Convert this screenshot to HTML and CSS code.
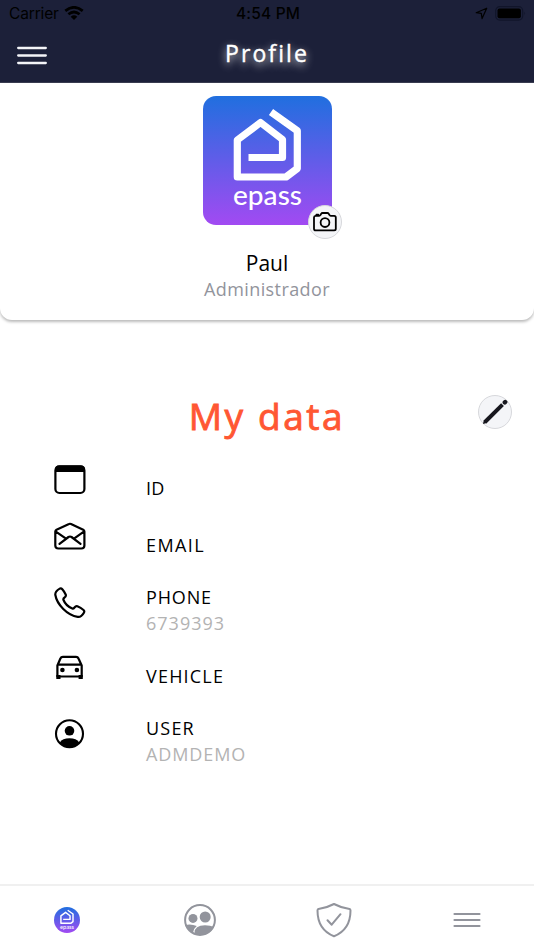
FILE: index.html
```html
<!DOCTYPE html>
<html lang="en">
<head>
<meta charset="utf-8">
<title>Profile</title>
<link rel="stylesheet" href="styles.css">
</head>
<body>
<svg class="defs" width="0" height="0" aria-hidden="true">
  <defs>
    <linearGradient id="brand" x1="0" y1="0" x2="0" y2="1"><stop offset="0" stop-color="#206fdf"/><stop offset="1" stop-color="#a24af2"/></linearGradient>
    <symbol id="epass" viewBox="0 0 129 129">
      <rect width="129" height="129" fill="url(#brand)"/>
      <path d="M45.500 61.500H79.500V43.500L57.500 26.500L34.300 44V81H83L94.300 72.500V34.800L68 16" fill="none" stroke="#fff" stroke-width="7.200" stroke-linejoin="round"/>
      <text x="30" y="108.500" textLength="69" lengthAdjust="spacingAndGlyphs" class="logo-text">epass</text>
    </symbol>
  </defs>
</svg>
<header class="top">
  <div class="status">
    <div class="carrier"><span>Carrier</span>
      <svg width="20" height="15" viewBox="0 0 20 15"><g fill="none" stroke="#000" stroke-width="2.700"><path d="M1.300 4.900Q10-2.300 18.700 4.900"/><path d="M4.400 8.300Q10 3.700 15.600 8.300"/></g><path d="M6.700 10.700Q10 8 13.300 10.700L10 14Z"/></svg>
    </div>
    <div class="clock">4:54 PM</div>
    <div class="indicators">
      <svg width="13" height="13" viewBox="0 0 13 13"><path d="M11.700 1.200L1.200 5.700L6.300 6.400L7.100 11.600Z" fill="none" stroke="#000" stroke-width="1.200" stroke-linejoin="round"/></svg>
      <svg width="32" height="15" viewBox="0 0 32 15"><rect x=".7" y=".7" width="27" height="13.400" rx="4" fill="none" stroke="#11152a" stroke-width="1.200"/><rect x="2.500" y="2.500" width="23.400" height="9.700" rx="2"/><path d="M29.300 5.500Q31 7.300 29.300 9.300Z" fill="#11152a"/></svg>
    </div>
  </div>
  <nav class="bar">
    <svg class="menu" width="30" height="19" viewBox="0 0 30 19"><path d="M1.200 2H28.800M1.200 9.500H28.800M1.200 17H28.800" stroke="#f3f4f8" stroke-width="2.300" stroke-linecap="round"/></svg>
    <h1>Profile</h1>
  </nav>
</header>
<section class="card">
  <div class="avatar">
    <svg class="picture" width="129" height="129"><use href="#epass"/></svg>
    <span class="badge camera"><svg width="24" height="20" viewBox="0 0 24 20" fill="none" stroke="#000" stroke-width="1.800" stroke-linejoin="round"><path d="M2.500 3.800H6.200Q7 3.800 7.500 2.900L8.200 1.800Q8.600 1 9.500 1H14.300Q15.200 1 15.700 1.800L16.400 2.900Q16.900 3.800 17.700 3.800H21.200Q22.800 3.800 22.800 5.400V16.800Q22.800 18.400 21.200 18.400H2.600Q1 18.400 1 16.800V5.400Q1 3.800 2.500 3.800Z"/><circle cx="12" cy="10.600" r="4.400"/><path d="M3.400 3.500V2.700H5.300V3.500"/></svg></span>
  </div>
  <div class="name">Paul</div>
  <div class="role">Administrador</div>
</section>
<main>
  <div class="heading">
    <h2>My data</h2>
    <span class="badge edit"><svg width="26" height="26" viewBox="0 0 26 26"><path d="M3 23L20.500 5.700" stroke="#17171e" stroke-width="4"/><path d="M1 25L1.800 21L5 24Z" fill="#17171e"/><path d="M22.800 3.400L23.200 3" stroke="#17171e" stroke-width="4.400" stroke-linecap="round"/></svg></span>
  </div>
  <div class="row">
    <svg width="32" height="32" viewBox="0 0 32 32"><rect x="1.400" y="2.400" width="29" height="26.600" rx="4" fill="none" stroke="#000" stroke-width="2.200"/><path d="M1 8V5Q1 1.500 5 1.500H27Q31 1.500 31 5V8Z"/></svg>
    <div class="field"><span class="id">ID</span></div>
  </div>
  <div class="row">
    <svg width="32" height="32" viewBox="0 0 32 32" fill="none" stroke="#000" stroke-width="2.200" stroke-linejoin="round" stroke-linecap="round"><path d="M1.300 10.500Q1.300 9.500 2.500 8.800L15 3Q16 2.500 17 3L29.200 8.800Q30.400 9.500 30.400 10.500V24.500Q30.400 27.500 27.400 27.500H4.300Q1.300 27.500 1.300 24.500ZM1.500 10.300L12 17.700M30.200 10.300L20 17.700M5.500 22.800L14.500 16Q16 15 17.500 16L26.500 22.800"/></svg>
    <div class="field"><span class="email">EMAIL</span></div>
  </div>
  <div class="row double">
    <svg width="32" height="32" viewBox="0 0 32 32" fill="none" stroke="#000" stroke-width="2.200" stroke-linejoin="round"><path d="M5.300 1.900Q7 .8 8.300 2.300Q10.500 4.800 11.800 7.800Q12.200 9.200 10.600 10.500Q8.900 11.600 9.500 13Q11.800 18.800 18.300 21.500Q19.400 21.900 20.500 20.500Q21.800 18.800 23.400 19.300Q26.800 20.700 29.500 23Q30.800 24.200 29.900 25.700Q27.300 30.400 23.700 29.900C13.500 28.300 2.900 17.700 1.300 7.800Q1.100 4.300 5.300 1.900Z"/></svg>
    <div class="field"><span class="phone">PHONE</span><span class="value number">6739393</span></div>
  </div>
  <div class="row">
    <svg width="32" height="32" viewBox="0 0 32 32"><path d="M3.400 13.500L6.400 6.500Q7.100 4.800 8.900 4.800H22Q23.800 4.800 24.500 6.500L27.700 13.500V24.500H3.400ZM4 12.600H27.200" fill="none" stroke="#000" stroke-width="2.200" stroke-linejoin="round"/><circle cx="8.400" cy="18" r="2.300"/><circle cx="22.900" cy="18" r="2.300"/><path d="M2.300 23H6.500V27H2.300ZM24.600 23H28.800V27H24.600Z"/></svg>
    <div class="field"><span class="vehicle">VEHICLE</span></div>
  </div>
  <div class="row double">
    <svg width="32" height="32" viewBox="0 0 32 32"><circle cx="15.500" cy="15.800" r="13.500" fill="none" stroke="#000" stroke-width="2.100"/><circle cx="15.500" cy="12.800" r="4.800"/><path d="M5.800 24.500Q8.500 20.300 15.500 20.300T25.200 24.500Q21 29.300 15.500 29.300T5.800 24.500Z"/></svg>
    <div class="field"><span class="user">USER</span><span class="value login">ADMDEMO</span></div>
  </div>
</main>
<footer class="tabs">
  <div><svg class="round" width="26" height="26"><use href="#epass"/></svg></div>
  <div><svg width="34" height="34" viewBox="0 0 34 34"><circle cx="17" cy="17" r="14.900" fill="none" stroke="#92949c" stroke-width="2"/><g fill="#92949c"><circle cx="10" cy="15.400" r="4.500"/><circle cx="22.200" cy="14" r="5.500"/><path d="M2 22Q8 20.500 13.800 23Q10.500 25.500 10 29.700Q4.500 27.500 2 22ZM11.500 30Q11.500 22.300 22 22.300Q27.500 22.300 31 24Q26.500 32 17 32Q14 32 11.500 30Z"/></g></svg></div>
  <div><svg width="36" height="36" viewBox="0 0 36 36" fill="none" stroke="#92949c" stroke-width="2" stroke-linecap="round" stroke-linejoin="round"><path d="M18 2Q10.500 6 2.500 7Q1.500 7.200 1.500 8.500C1.500 21 7 29.800 18 34.300C29 29.800 34.500 21 34.500 8.500Q34.500 7.200 33.500 7Q25.500 6 18 2Z"/><path d="M11.500 18.200L15.700 22.700L24.500 12.200"/></svg></div>
  <div><svg width="28" height="18" viewBox="0 0 28 18"><path d="M1.500 3H26.500M1.500 9H26.500M1.500 15H26.500" stroke="#92949c" stroke-width="2.200" stroke-linecap="round"/></svg></div>
</footer>
</body>
</html>
```
FILE: styles.css
```css
* { box-sizing: border-box; }
body {
  margin: 0;
  height: 950px;
  display: flex;
  flex-direction: column;
  overflow: hidden;
  background: #fff;
  color: #000;
  font-family: "Open Sans", "Noto Sans", sans-serif;
}
svg { display: block; flex: none; }
.defs { position: absolute; }
h1, h2 { margin: 0; }
.top { height: 83px; background: #1c2039; border-bottom: 1px solid #3a3d51; flex: none; }
.status {
  height: 28px;
  display: grid;
  grid-template-columns: 1fr auto 1fr;
  align-items: center;
  padding: 0 7px 0 9px;
  font: 15.500px/28px Inter, sans-serif;
}
.carrier { display: flex; gap: 5px; align-items: center; }
.carrier span { letter-spacing: -.15px; }
.carrier svg { margin-top: -2px; }
.clock { font-weight: 500; letter-spacing: .2px; }
.indicators { display: flex; justify-content: flex-end; align-items: center; gap: 7px; margin-top: -1px; }
.bar { height: 54px; display: grid; grid-template-columns: 60px 1fr 60px; align-items: center; }
.menu { margin-left: 17px; }
h1 {
  color: #fff;
  text-align: center;
  font-size: 23px;
  line-height: 32px;
  font-weight: 400;
  -webkit-text-stroke: .4px #fff;
  letter-spacing: 2.100px;
  margin-top: -4px;
  text-shadow: 0 3px 8px #fff;
}
.card {
  height: 237px;
  flex: none;
  display: flex;
  flex-direction: column;
  align-items: center;
  padding-top: 13px;
  border-radius: 0 0 12px 12px;
  box-shadow: 0 2px 3px rgba(0, 0, 0, .27);
}
.avatar { position: relative; height: 129px; }
.picture { border-radius: 13px; }
.logo-text { font: 500 27px Lato, sans-serif; fill: #fff; }
.badge {
  width: 34px;
  height: 34px;
  border-radius: 50%;
  border: 1px solid #d7d8dc;
  background: #f4f5f8;
  display: flex;
  align-items: center;
  justify-content: center;
}
.camera { position: absolute; right: -10px; bottom: -14px; }
.name { margin-top: 23px; font-size: 21px; line-height: 30px; }
.role { font-size: 18px; line-height: 24px; color: #92949c; letter-spacing: .4px; margin-top: -1px; }
.heading {
  height: 131.500px;
  padding: 68px 22px 0;
  display: grid;
  grid-template-columns: 34px 1fr 34px;
}
h2 {
  grid-column: 2;
  text-align: center;
  color: #ff5733;
  font-size: 37px;
  line-height: 56px;
  font-weight: 400;
  -webkit-text-stroke: .9px #ff5733;
  letter-spacing: 2.600px;
}
.edit { margin-top: 7px; }
.row { height: 57px; display: flex; align-items: center; gap: 60.500px; padding-left: 53.500px; }
.double { height: 74px; }
.field { display: flex; flex-direction: column; padding-top: 15px; font-size: 18px; line-height: 26px; }
.id { letter-spacing: .3px; }
.email { letter-spacing: 1.400px; }
.phone { letter-spacing: .85px; }
.vehicle { letter-spacing: 1.200px; }
.user { letter-spacing: 1.200px; }
.value { color: #b3b3b3; }
.number { letter-spacing: 1px; }
.login { letter-spacing: .9px; }
.tabs {
  margin-top: auto;
  height: 66px;
  border-top: 2px solid #f0f0f0;
  display: grid;
  grid-template-columns: repeat(4, 1fr);
  align-items: center;
  justify-items: center;
  padding-top: 3px;
}
.round { border-radius: 50%; }
```
